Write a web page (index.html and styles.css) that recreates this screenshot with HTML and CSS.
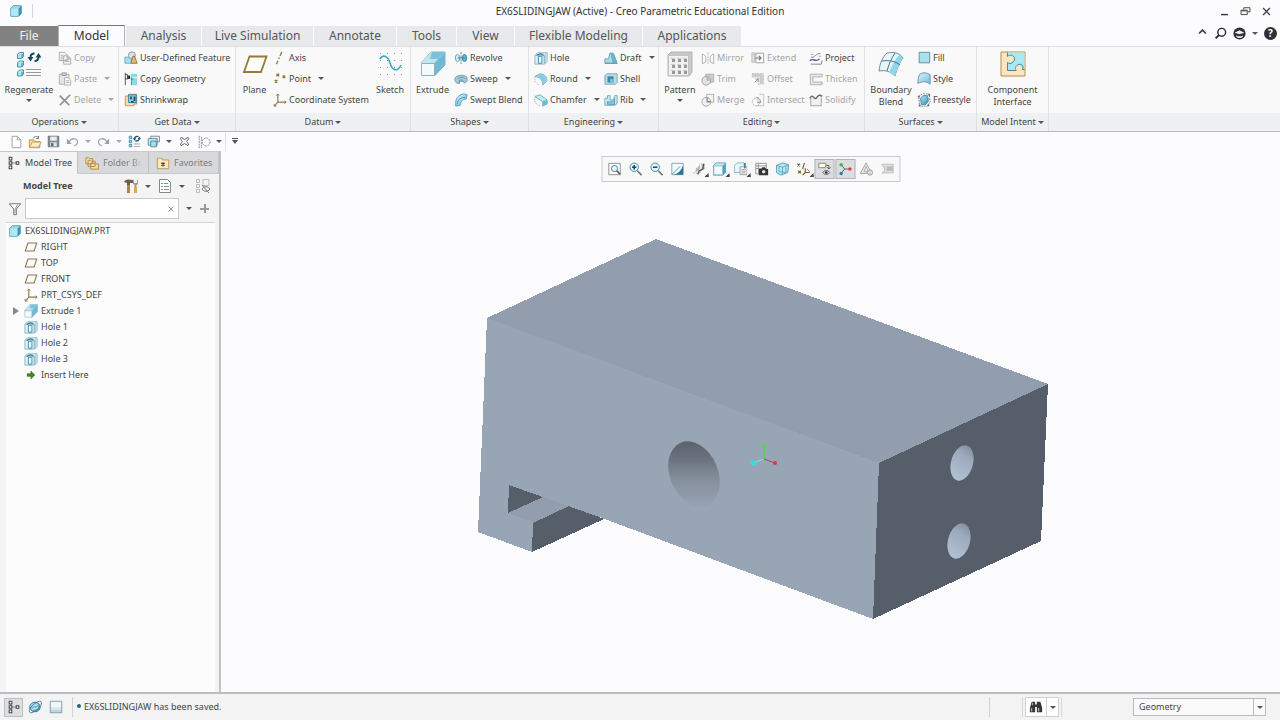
FILE: index.html
```html
<!DOCTYPE html>
<html lang="en">
<head>
<meta charset="utf-8">
<title>EX6SLIDINGJAW (Active) - Creo Parametric Educational Edition</title>
<link rel="stylesheet" href="styles.css">
</head>
<body>
<svg class="defs" aria-hidden="true">
  <defs>
    <linearGradient id="g-ice" x1="0" y1="0" x2="1" y2="1"><stop offset="0" stop-color="#d9f4fb"/><stop offset="1" stop-color="#72bfdb"/></linearGradient>
    <linearGradient id="g-blue" x1="0" y1="0" x2="1" y2="1"><stop offset="0" stop-color="#b6e6f4"/><stop offset="1" stop-color="#3a8fb7"/></linearGradient>
    <linearGradient id="g-hole" x1="0.650" y1="0" x2="0.350" y2="1"><stop offset="0" stop-color="#59616b"/><stop offset="0.250" stop-color="#68707c"/><stop offset="0.600" stop-color="#87919e"/><stop offset="1" stop-color="#98a4b4"/></linearGradient>
    <linearGradient id="g-bore" x1="0.600" y1="0" x2="0.400" y2="1"><stop offset="0" stop-color="#8490a0"/><stop offset="0.300" stop-color="#9daabd"/><stop offset="1" stop-color="#b3c1d4"/></linearGradient>
  </defs>
  <symbol id="cube" viewBox="0 0 16 16"><path d="M2 5 5 2h9v9l-3 3H2z" fill="#9fdbea" stroke="#4c93ac"/><path d="M2.500 5.500h8v8h-8z" fill="#abebf5"/><path d="M11 5v9l3-3V2z" fill="#3f91b3"/></symbol>
  <symbol id="copy" viewBox="0 0 16 16"><path d="M1.500 1.500h6l3 3V11h-9zM6.500 5.500h5l3 3V15h-8z" fill="#f7f7f7" stroke="#a5a5a5"/><path d="M3 5h3M3 7h3M3 9h3M8 10h5M8 12h5M11.500 5.500v3h3" stroke="#adadad" fill="none"/></symbol>
  <symbol id="paste" viewBox="0 0 16 16"><path d="M1.500 2.500h11V14h-11z" fill="#e6e6e6" stroke="#aaa"/><path d="M4.500 1h5v3h-5z" fill="#ccc" stroke="#999"/><path d="M7.500 6.500h4l3 3V15h-7z" fill="#fafafa" stroke="#aaa"/><path d="M9 10h4M9 12h4" stroke="#aaa"/></symbol>
  <symbol id="delete" viewBox="0 0 16 16"><path d="m2 3 11 11M14 2 2 14" stroke="#8f8f8f" stroke-width="2"/></symbol>
  <symbol id="udf" viewBox="0 0 16 16"><path d="M1 7h8v7H1z" fill="#a8ddea" stroke="#6aaec4"/><circle cx="9" cy="5" r="4" fill="#dce3ea" stroke="#7c8fa1"/><path d="M10 6h2l3 8H8z" fill="#e0ba75" stroke="#8b6c3a"/></symbol>
  <symbol id="copygeo" viewBox="0 0 16 16"><path d="M1.500 1v14M1 3h3v5H1" fill="none" stroke="#444"/><path d="M4 4h3v4H4z" fill="#333"/><path d="M8 2h7v4H8zM9 7h6v8H9z" fill="#8fd8e8"/><path d="M8.500 6v9M8 8h3" stroke="#2f7f9c" fill="none"/></symbol>
  <symbol id="shrink" viewBox="0 0 16 16"><path d="M1.500 3.500h4v-2h9v11h-3v2h-10z" fill="#f6e3bb" stroke="#c08c4b"/><path d="M5 2h9v9H5z" fill="#83cbe0" stroke="#2e7d9a"/><path d="M7 4h2v3H7zM11 4h2v5h-2zM8 9h3v2H8z" fill="#15506b"/></symbol>
  <symbol id="axis" viewBox="0 0 16 16"><path d="M10 1 4 15" stroke="#8f7b45" stroke-width="1.500" stroke-dasharray="5 2 2 2"/></symbol>
  <symbol id="point" viewBox="0 0 16 16"><path d="m4 2 3 3M7 2 4 5M11 4l3 3M14 4l-3 3M2 9l3 3M5 9l-3 3" stroke="#8f742e" stroke-width="1.500"/></symbol>
  <symbol id="csys" viewBox="0 0 16 16"><path d="M5.500 1v9.500H15M5.500 10.500 1.500 15" fill="none" stroke="#8b794f" stroke-width="1.300"/><path d="m4 3 1.500-2L7 3M13 9l2 1.500-2 1.500M1.300 12.500V15H4" fill="none" stroke="#8b794f"/></symbol>
  <symbol id="plane" viewBox="0 0 16 16"><path d="M4.500 3.500h10l-3 9h-10z" fill="#fdfdf6" stroke="#7e7650" stroke-width="1.200"/></symbol>
  <symbol id="revolve" viewBox="0 0 16 16"><ellipse cx="4" cy="8" rx="2.500" ry="4" fill="#d5effa" stroke="#529ec1"/><ellipse cx="12" cy="8" rx="2.500" ry="4" fill="#65b7d8" stroke="#2d7fa7"/><path d="M8 1v14" stroke="#687b86" stroke-dasharray="3 1"/><path d="M4 8h9" stroke="#397f9d"/></symbol>
  <symbol id="sweep" viewBox="0 0 16 16"><path d="M1 8c0-5 13-6 14-1v3c-1 3-4 3-4 1-3-1-5 0-5 2-4 0-5-2-5-5z" fill="#a6cbd7" stroke="#6699aa"/><path d="M4 8c3-3 8-2 9 0M6 13v-3c2-2 5 0 5 1" fill="none" stroke="#5695ab"/></symbol>
  <symbol id="blend" viewBox="0 0 16 16"><path d="M2 11C2 5 6 2 11 1l4 1-1 5C9 7 8 10 7 14l-5 1z" fill="url(#g-ice)" stroke="#4c9abb"/><path d="M4 13c0-6 4-8 9-8" fill="none" stroke="#3986a6"/></symbol>
  <symbol id="hole" viewBox="0 0 16 16"><path d="M1 5 4 2h11v10l-3 3H1z" fill="#dcf1f6" stroke="#8fb2bd"/><path d="M1.500 5h10v9.500M12 5l3-3" fill="none" stroke="#9cc6d2"/><path d="M5 14V6h4v8z" fill="#effbfe" stroke="#2c86aa"/><path d="M3 5c3-2 6-2 8 0" fill="none" stroke="#3286a4" stroke-width="1.500"/><path d="M12.500 5v9" stroke="#6a9cae"/></symbol>
  <symbol id="round" viewBox="0 0 16 16"><path d="M1 5 7 2c5 0 8 4 8 8l-5 5c0-6-3-9-9-10z" fill="#b3e2ef" stroke="#6dabbf"/><path d="M2 5c5 0 8 5 8 9l4-4C14 5 10 3 7 2" fill="#8dcce0"/><path d="M1 6v5l5 4" fill="none" stroke="#aaa" stroke-dasharray="1 1"/></symbol>
  <symbol id="chamfer" viewBox="0 0 16 16"><path d="m1 4 6-2 8 6v4l-5 3V10z" fill="#c7e9f2" stroke="#6dabbf"/><path d="m10 9 5-1v5l-5 2z" fill="#70b9d3"/><path d="M1 5v6l6 4" fill="none" stroke="#999" stroke-dasharray="1 1"/></symbol>
  <symbol id="draft" viewBox="0 0 16 16"><path d="M1 14V9h4l2-7 4 1 4 11z" fill="#a9dceb" stroke="#6c9aaa"/><path d="m7 2 3 12h5L11 3z" fill="#68b4ce"/><path d="M1 14h14" stroke="#888"/></symbol>
  <symbol id="shell" viewBox="0 0 16 16"><path d="M1 4 3 2h12v10l-2 2H1z" fill="#b8dae3" stroke="#82a2ad"/><path d="M4 5h7v7H4z" fill="#3b89ab"/><path d="M7 8h4v4H7z" fill="#66c9e4"/></symbol>
  <symbol id="rib" viewBox="0 0 16 16"><path d="M1 6h3V3h3v5c3 0 5-1 5-5h3v9l-3 2H1z" fill="#c3eaf3" stroke="#6aa8bc"/><path d="M4 10c5 1 7-1 8-4v7H4z" fill="#84cadf" stroke="#559caf"/></symbol>
  <symbol id="mirror" viewBox="0 0 16 16"><path d="M1.500 3.500h1l3 3v6l-4 2zM14.500 3.500h-1l-3 3v6l4 2z" fill="none" stroke="#a9a9a9"/><path d="M8 1v14" stroke="#bbb" stroke-dasharray="3 1"/></symbol>
  <symbol id="trim" viewBox="0 0 16 16"><path d="M5.500 2.500h9v9h-9z" fill="#ccc" stroke="#aaa"/><circle cx="6" cy="10" r="5" fill="#e3e3e3" stroke="#999"/><path d="M6 6a4 4 0 0 1 4 4H6z" fill="#bbb"/></symbol>
  <symbol id="merge" viewBox="0 0 16 16"><path d="M6.500 1.500h8v9h-8z" fill="#f3f3f3" stroke="#aaa"/><circle cx="6" cy="10" r="5" fill="#f1f1f1" stroke="#999"/><path d="M7 5.500V10h4" fill="none" stroke="#888" stroke-width="1.500"/></symbol>
  <symbol id="extend" viewBox="0 0 16 16"><path d="M1 2h3v11H1z" fill="#ddd" stroke="#bbb"/><path d="M5.500 2.500h9v11h-9z" fill="none" stroke="#999"/><path d="M5 8h6M9 5.500 11.500 8 9 10.500" fill="none" stroke="#777" stroke-width="1.400"/></symbol>
  <symbol id="offset" viewBox="0 0 16 16"><path d="M1 5.500h8v9M1 2h13v12" fill="none" stroke="#aaa" stroke-dasharray="2 1"/><path d="M10 3h4v11h-4zM1 2h12v3H1z" fill="#ccc"/><path d="m4 12 4-4M5 8h3v3" fill="none" stroke="#888"/></symbol>
  <symbol id="intersect" viewBox="0 0 16 16"><path d="M9.500 1.500h5v13h-9" fill="none" stroke="#bbb"/><circle cx="6" cy="10" r="4.500" fill="none" stroke="#aaa" stroke-dasharray="2 1"/><path d="M6 5c4 1 5 3 5 6H7" fill="#ddd" stroke="#888"/></symbol>
  <symbol id="project" viewBox="0 0 16 16"><path d="M2 7c4 2 6-5 11-4M2 15h12l1-4" fill="none" stroke="#777"/><path d="M1 11c5-4 6 3 11-2" fill="none" stroke="#644c8d" stroke-width="1.600"/><path d="M2 4h3M11 6h3" stroke="#999"/></symbol>
  <symbol id="thicken" viewBox="0 0 16 16"><path d="M15 2.500H1.500v12H15v-3H4.500v-6H15z" fill="#e8e8e8" stroke="#aaa"/></symbol>
  <symbol id="solidify" viewBox="0 0 16 16"><path d="M2 5v9.500h12V5" fill="#f2f2f2" stroke="#999"/><path d="M1 6c3-7 5 4 8-1 2-3 4-3 6-1" fill="none" stroke="#666" stroke-width="1.600"/></symbol>
  <symbol id="fill" viewBox="0 0 16 16"><path d="M2.500 1.500h12v12h-12z" fill="#a6e3ee" stroke="#5c8796"/></symbol>
  <symbol id="style" viewBox="0 0 16 16"><path d="M1 13C1 8 2 3 4 2c4-2 7-1 11 1v11c-3-3-8-4-14-1z" fill="url(#g-ice)" stroke="#67899a"/></symbol>
  <symbol id="freestyle" viewBox="0 0 16 16"><path d="M2 4 6 1h8l1 9-3 5H3z" fill="none" stroke="#68747b" stroke-dasharray="2 1"/><path d="m4 6 3-3h5l1 6-3 4H5z" fill="url(#g-blue)" stroke="#3683a2"/><path d="M1 3h2v2H1zM13 1h2v2h-2zM2 13h2v2H2zM12 13h2v2h-2z" fill="#666"/></symbol>

  <symbol id="regenerate" viewBox="0 0 26 26"><g fill="#a9e8f2" stroke="#4c93ac"><path d="m1.500 3 2-1.500h4v4l-2 2h-4zM1.500 12l2-2h4v4l-2 2h-4zM1.500 21l2-2h4v4l-2 2h-4z"/></g><path d="M6 3v4M6 12v4M6 21v4" stroke="#347f9a"/><g fill="none" stroke="#154b65" stroke-width="2"><path d="M14.500 6.500c0-3 2-4 4-4M22.500 6c0 3-2 4-4 4"/></g><path d="M11.500 6h6l-3 4.500zM19.500 6.500l3-4.500 3 4.500z" fill="#154b65"/><path d="M10 18.500h15M10 21.500h15M10 24.500h15" stroke="#999"/></symbol>
  <symbol id="plane-l" viewBox="0 0 26 26"><path d="M7.500 5.500h17L19 21H2z" fill="#fdfdf7" stroke="#927b3b" stroke-width="1.800"/></symbol>
  <symbol id="sketch" viewBox="0 0 26 26"><path d="M3 2.500h22M3 9.500h22M3 16.500h22M3 23.500h22" stroke="#969696" stroke-dasharray="1 6"/><path d="M3 8c3-5 8-3 10 4s7 10 11 2" fill="none" stroke="#40a6c1" stroke-width="1.600"/></symbol>
  <symbol id="extrude" viewBox="0 0 26 26"><path d="M1 12 11 1h14v13L14 25V12z" fill="#8acbe2" stroke="#90aeb9"/><path d="M1 12 11 1h14L14 12z" fill="#bfe5ef"/><path d="m15 12 10-11v13L15 25z" fill="#6fb9d5"/><path d="m12 1-2 7h8l7-7z" fill="#7cc0d9"/><path d="M1.500 12.500h13v12h-13z" fill="#f2fafc" stroke="#9badb5"/></symbol>
  <symbol id="pattern" viewBox="0 0 26 26"><path d="m1 4 3-3h21v20l-3 4H1z" fill="#c9c9c9" stroke="#b3b3b3"/><path d="M1.500 4.500h20v20h-20z" fill="#f0f0f0" stroke="#c4c4c4"/><g fill="#999"><path d="M5 8h3v3H5zM11 8h3v3h-3zM17 8h3v3h-3zM5 14h3v3H5zM11 14h3v3h-3zM17 14h3v3h-3zM5 20h3v3H5zM11 20h3v3h-3zM17 20h3v3h-3z"/></g><path d="M4 7.500h4M10 7.500h4M16 7.500h4M4 13.500h4M10 13.500h4M16 13.500h4M4 19.500h4M10 19.500h4M16 19.500h4" stroke="#ccc"/></symbol>
  <symbol id="boundary" viewBox="0 0 26 26"><path d="M1 20C2 11 5 6 9 2c6-1 12-1 16 5-3 4-6 10-8 18-5-5-10-6-16-5z" fill="#e5f7fc" stroke="#6f8e9b"/><path d="M15 13c2-4 4-7 6-9l4 3c-3 4-6 10-8 18l-6-4z" fill="#8fd6ec"/><path d="M4 10c7-1 13 0 18 4M17 2c-4 6-6 11-8 18" fill="none" stroke="#50727f"/></symbol>
  <symbol id="component" viewBox="0 0 26 26"><path d="M1 1h24v24H1z" fill="#fae7c2" stroke="#bd884f"/><path d="M7.500 1.500h17v18H7.500z" fill="#a8e9f3"/><path d="M7.500 1.500v4c5-4 9 2 6 5-2 3-5 2-6 1v8h9c-4-7 9-9 6-1h2" fill="none" stroke="#5c8186"/><path d="M7.500 6c5-4 8 2 5 4-2 2-4 1-5 1zM16.500 19.500c-3-7 8-7 5 0z" fill="#fae7c2"/></symbol>

  <symbol id="new" viewBox="0 0 16 16"><path d="M3.500 1.500h6l4 4v9h-10z" fill="#fff" stroke="#999"/><path d="M9.500 1.500v4h4" fill="none" stroke="#999"/></symbol>
  <symbol id="open" viewBox="0 0 16 16"><path d="M1.500 5.500h5l1 2h6v7h-12z" fill="#f5db94" stroke="#b8924c"/><path d="m2 14 3-6h10l-3 6z" fill="#ffefbf" stroke="#c19b55"/><path d="M6 4c1-3 4-3 6-1M12 1v3H9" fill="none" stroke="#666"/></symbol>
  <symbol id="save" viewBox="0 0 16 16"><path d="M1.500 1.500h13v13h-13z" fill="#858e93" stroke="#646d71"/><path d="M4 2h8v5H4z" fill="#e8eff2"/><path d="M4 9h8v5H4z" fill="#dce5e8"/><path d="M5 10h3v4H5z" fill="#606b70"/></symbol>
  <symbol id="undo" viewBox="0 0 16 16"><path d="M4 8c3-5 11-4 10 1 0 2-2 4-4 4" fill="none" stroke="#a0a5a9" stroke-width="1.700"/><path d="M1 4v7h6z" fill="#9ba0a4"/></symbol>
  <symbol id="regen-s" viewBox="0 0 16 16"><path d="M1.500 1.500h3v3h-3zM1.500 6.500h3v3h-3zM1.500 11.500h3v3h-3z" fill="#a5dbe9" stroke="#3b839b"/><path d="M8 5c0-3 3-4 5-3M14 4c0 3-3 4-5 3" fill="none" stroke="#17536d" stroke-width="1.600"/><path d="M6 4h4L8 7zM12 5h4l-2-3z" fill="#17536d"/><path d="M7 11h8M7 14h8" stroke="#999"/></symbol>
  <symbol id="windows" viewBox="0 0 16 16"><path d="M4.500 1.500h11v7h-11z" fill="#eee" stroke="#777"/><path d="M1.500 4.500h11v8h-11z" fill="#d2edf5" stroke="#397e98"/><path d="M4.500 7.500h7v7h-7z" fill="#aadfec" stroke="#397e98"/></symbol>
  <symbol id="closewin" viewBox="0 0 16 16"><path d="m3 2 5 3 5-3 1 2-3 4 3 4-1 2-5-3-5 3-1-2 3-4-3-4z" fill="#fff" stroke="#555" stroke-width="1.300"/></symbol>
  <symbol id="sel" viewBox="0 0 16 16"><path d="M2.500 1v14M5 2v13" stroke="#777" stroke-dasharray="2 1"/><circle cx="10.500" cy="8" r="4.500" fill="none" stroke="#777" stroke-dasharray="2 1"/></symbol>
  <symbol id="tree" viewBox="0 0 16 16"><path d="M4.500 4v8M5 8h6" stroke="#777"/><path d="M2.500 1.500h3v3h-3zM2.500 6.500h3v3h-3zM2.500 11.500h3v3h-3zM10.500 6.500h3v3h-3z" fill="#fff" stroke="#444" stroke-width="1.200"/></symbol>
  <symbol id="folders" viewBox="0 0 16 16"><g fill="#f8dda1" stroke="#ae8247"><path d="M1 2h3l1 1h4v6H1zM3.500 5h3l1 1h4v6h-8zM6.500 8h3l1 1h5v6h-9z"/></g></symbol>
  <symbol id="favs" viewBox="0 0 16 16"><path d="M1.500 2.500h5l1 2h7v10h-13z" fill="#fbe9bd" stroke="#b99458"/><path d="M8 7v5M6 8l4 3M10 8l-4 3" stroke="#175068" stroke-width="1.200"/></symbol>
  <symbol id="tools" viewBox="0 0 16 16"><path d="M1 4c1-3 5-3 9-2v3H7v10H4V5z" fill="#755e49"/><path d="M4 7h3v8H4z" fill="#b38648"/><path d="M11 1v4h3V1l1 2v3l-1.500 1v3h-2V7L10 6V3z" fill="#999"/><path d="M11 9h3v6h-3z" fill="#e0aa4e"/></symbol>
  <symbol id="doc" viewBox="0 0 16 16"><path d="M2.500 1.500h8l3 3v10h-11z" fill="#fff" stroke="#888"/><path d="M4 5.500h2M7 5.500h4M4 8.500h2M7 8.500h5M4 11.500h2M7 11.500h5" stroke="#7d939e"/></symbol>
  <symbol id="treehide" viewBox="0 0 16 16"><path d="M1.500 1.500h3v3h-3zM1.500 6.500h3v3h-3zM1.500 11.500h3v3h-3zM8 1.500h6v6H8z" fill="none" stroke="#bbb"/><path d="M7 11c2-3 6-3 8 0-2 3-6 3-8 0M7 7l7 8" fill="none" stroke="#777"/></symbol>
  <symbol id="funnel" viewBox="0 0 16 16"><path d="M1.500 2h13L9.500 8v6.500h-3V8z" fill="#fff" stroke="#666"/><path d="M11 3 8 8v5" fill="none" stroke="#888"/></symbol>
  <symbol id="insert" viewBox="0 0 16 16"><path d="M2 6h6V2l6 6-6 6v-4H2z" fill="#3f8b1f" stroke="#286010"/></symbol>
  <symbol id="xmark" viewBox="0 0 16 16"><path d="m3 3 10 10M13 3 3 13" stroke="currentColor" stroke-width="2"/></symbol>

  <symbol id="refit" viewBox="0 0 16 16"><path d="M1.500 1.500h13v13h-13z" fill="#fff" stroke="#858585"/><circle cx="8" cy="7.500" r="3.500" fill="#e8f8fd" stroke="#36748b"/><path d="m10.500 10 4 4" stroke="#555" stroke-width="2"/></symbol>
  <symbol id="zoomin" viewBox="0 0 16 16"><circle cx="6.500" cy="6" r="4.800" fill="#e4f5fb" stroke="#357a98"/><path d="M4 6h5M6.500 3.500v5" stroke="#0b506e" stroke-width="1.800"/><path d="m10 10 5 5" stroke="#777" stroke-width="2"/></symbol>
  <symbol id="zoomout" viewBox="0 0 16 16"><circle cx="6.500" cy="6" r="4.800" fill="#e4f5fb" stroke="#357a98"/><path d="M4 6h5" stroke="#0b506e" stroke-width="1.800"/><path d="m10 10 5 5" stroke="#777" stroke-width="2"/></symbol>
  <symbol id="repaint" viewBox="0 0 16 16"><path d="M1.500 1.500h13v13h-13z" fill="#eefafd" stroke="#829da7"/><path d="M14.500 4v10.500H4C9 13 12 10 14.500 4z" fill="#277697"/><path d="m2 14 9-9" stroke="#4c95b1"/></symbol>
  <symbol id="render" viewBox="0 0 16 16"><path d="M1 12c3 0 4-1 4-4 1-2 3-1 4-6h6v6l-4 2c-1 4-5 5-10 2z" fill="#b4b4b4"/><path d="M9 3c3 0 2 5 0 7-2 2-4 3-6 2" fill="none" stroke="#f2f2f2" stroke-width="2"/><path d="m14 2-1 6-4 2-2 4" stroke="#555" stroke-width="1.500" fill="none"/></symbol>
  <symbol id="box" viewBox="0 0 16 16"><path d="M1 4 4 1h11v11l-3 3H1z" fill="#bfeaf4" stroke="#5b9eb3"/><path d="M1.500 4.500h10v10h-10z" fill="#f1fcff" stroke="#8cb5c2"/><path d="M12 4v11l3-3V1z" fill="#51a2c0"/></symbol>
  <symbol id="views" viewBox="0 0 16 16"><path d="M1 4 4 1h8v11H1z" fill="#e4f7fb" stroke="#8bb0bd"/><path d="M7.500 5.500h8v9h-8z" fill="#fafafa" stroke="#999"/><path d="M9 8.500h5M9 10.500h5M9 12.500h5" stroke="#999"/><path d="M13 1v6" stroke="#3b83a0" stroke-width="2"/></symbol>
  <symbol id="viewmgr" viewBox="0 0 16 16"><path d="M1.500 1.500h12v12h-12zM1.500 4.500h12M1.500 7.500h12M4.500 2v11" fill="#fff" stroke="#888"/><path d="M5 8h3l1-2h3l1 2h3v7H5z" fill="#333"/><circle cx="10.500" cy="11" r="2" fill="#ddd"/></symbol>
  <symbol id="persp" viewBox="0 0 16 16"><path d="m1 4 7-3 7 2-1 9-8 3-5-3z" fill="#b9e6f1" stroke="#4d96b1"/><path d="m1 4 7 2v9M8 6l7-3M4 6v5l8 1V5" fill="none" stroke="#5aa5c0"/></symbol>
  <symbol id="datums" viewBox="0 0 16 16"><path d="m1 2 3 3M4 2 1 5M9 1 7 8M2 10l3 3M5 10l-3 3M10 7v5h5M10 12l-3 3" fill="none" stroke="#775d27" stroke-width="1.300"/><path d="m12 8 3 3" stroke="#8e6a22"/></symbol>
  <symbol id="annot" viewBox="0 0 16 16"><path d="M1.500 1.500h8v5h-8z" fill="#fffdec" stroke="#917b4a"/><path d="M10 4h3v4M11 6l2 2 2-2M6 12c2-3 6-3 8 0-2 3-6 3-8 0z" fill="none" stroke="#555"/><circle cx="10" cy="12" r="1.500" fill="#333"/></symbol>
  <symbol id="spin" viewBox="0 0 16 16"><path d="m3 3 4 5-4 5M7 8h6" fill="none" stroke="#555"/><circle cx="3" cy="3" r="2" fill="#5ba85c"/><circle cx="3" cy="13" r="2" fill="#347baa"/><circle cx="13" cy="8" r="2" fill="#c44"/></symbol>
  <symbol id="warn" viewBox="0 0 16 16"><path d="m7.500 1 6.500 12H1z" fill="#eee" stroke="#999"/><path d="M7.500 5 10 11H5z" fill="none" stroke="#aaa"/><circle cx="12" cy="12" r="3" fill="#ddd" stroke="#999"/></symbol>
  <symbol id="section" viewBox="0 0 16 16"><path d="M1.500 2.500h13v10h-13l3-2v-3z" fill="#ddd" stroke="#bbb"/><path d="M7 5h7v5H7z" fill="#bbb"/></symbol>
  <symbol id="globe" viewBox="0 0 16 16"><ellipse cx="8" cy="8" rx="6" ry="5.500" fill="url(#g-blue)" stroke="#347b9b"/><path d="M4 7c3-4 4 1 7-2M5 11c2-3 5 1 6-3" fill="none" stroke="#b7e4f3" stroke-width="1.600"/><path d="M2 14C-1 10 11-1 15 2c3 5-11 15-13 12z" fill="none" stroke="#4e7588"/></symbol>
  <symbol id="pane" viewBox="0 0 16 16"><path d="M1.500 1.500h13v13h-13z" fill="url(#g-pane)" stroke="#5d8191"/><path d="M2 2h12v6H2z" fill="#f1f8fa"/><path d="M2 8h12v3H2z" fill="#d9eaf0"/><path d="M2 11h12v3H2z" fill="#bcd8e2"/></symbol>
  <symbol id="binoc" viewBox="0 0 16 16"><path d="M3 2h4v3h2V2h4l2 7v5H9V8H7v6H1V9z" fill="#333"/><path d="M3 9v4M11 9v4M4 3v3" stroke="#aaa" stroke-width="1.500"/></symbol>
  <symbol id="min" viewBox="0 0 16 16"><path d="M3 12.500h10" stroke="#333" stroke-width="2"/></symbol>
  <symbol id="restore" viewBox="0 0 16 16"><path d="M5.500 5V2.500h9v6H11M1.500 6h9v6.500h-9zM2 7h8" fill="none" stroke="#444" stroke-width="1.400"/></symbol>
  <symbol id="up" viewBox="0 0 16 16"><path d="m3 8 5-5 5 5" fill="none" stroke="#444" stroke-width="2.500"/></symbol>
  <symbol id="find" viewBox="0 0 16 16"><circle cx="9.500" cy="6.500" r="4.800" fill="none" stroke="#2a2a2a" stroke-width="1.800"/><path d="m6 10-4 4" stroke="#2a2a2a" stroke-width="2.500"/></symbol>
  <symbol id="learn" viewBox="0 0 16 16"><circle cx="8" cy="8" r="7.500" fill="#303033"/><path d="m2 7 6-3 6 3-6 2zM4 10c2 2 6 2 8 0v2c-2 2-6 2-8 0z" fill="#eee"/></symbol>
</svg>

<header class="titlebar">
  <svg class="i14 appicon"><use href="#cube"/></svg>
  <h1>EX6SLIDINGJAW (Active) - Creo Parametric Educational Edition</h1>
  <div class="winctl">
    <button aria-label="Minimize"><svg class="i11"><use href="#min"/></svg></button>
    <button aria-label="Restore"><svg class="i11"><use href="#restore"/></svg></button>
    <button aria-label="Close"><svg class="i11"><use href="#xmark"/></svg></button>
  </div>
</header>

<nav class="tabs">
  <button class="tab file">File</button>
  <button class="tab active">Model</button>
  <button class="tab t-analysis">Analysis</button>
  <button class="tab t-live">Live Simulation</button>
  <button class="tab t-annotate">Annotate</button>
  <button class="tab t-tools">Tools</button>
  <button class="tab t-view">View</button>
  <button class="tab t-flex">Flexible Modeling</button>
  <button class="tab t-apps">Applications</button>
  <div class="tabctl">
    <button aria-label="Collapse ribbon"><svg class="i11"><use href="#up"/></svg></button>
    <button aria-label="Search"><svg class="i13"><use href="#find"/></svg></button>
    <button aria-label="Learning"><svg class="i13"><use href="#learn"/></svg></button>
    <button aria-label="More"><i class="arr"></i></button>
    <button class="help" aria-label="Help">?</button>
  </div>
</nav>

<section class="ribbon" aria-label="Model ribbon">
  <div class="group w119">
    <div class="tools c-ops">
      <button class="big"><svg><use href="#regenerate"/></svg><span>Regenerate</span><i class="arr"></i></button>
      <div class="col">
        <button class="sm" disabled><svg><use href="#copy"/></svg>Copy</button>
        <button class="sm" disabled><svg><use href="#paste"/></svg>Paste<i class="arr"></i></button>
        <button class="sm" disabled><svg><use href="#delete"/></svg>Delete<i class="arr"></i></button>
      </div>
    </div>
    <button class="label">Operations<i class="arr"></i></button>
  </div>
  <div class="group w117">
    <div class="tools c-data">
      <div class="col">
        <button class="sm"><svg><use href="#udf"/></svg>User-Defined Feature</button>
        <button class="sm"><svg><use href="#copygeo"/></svg>Copy Geometry</button>
        <button class="sm"><svg><use href="#shrink"/></svg>Shrinkwrap</button>
      </div>
    </div>
    <button class="label">Get Data<i class="arr"></i></button>
  </div>
  <div class="group w175">
    <div class="tools c-datum">
      <button class="big"><svg><use href="#plane-l"/></svg><span>Plane</span></button>
      <div class="col">
        <button class="sm"><svg><use href="#axis"/></svg>Axis</button>
        <button class="sm"><svg><use href="#point"/></svg>Point<i class="arr"></i></button>
        <button class="sm"><svg><use href="#csys"/></svg>Coordinate System</button>
      </div>
      <button class="big"><svg><use href="#sketch"/></svg><span>Sketch</span></button>
    </div>
    <button class="label">Datum<i class="arr"></i></button>
  </div>
  <div class="group w118">
    <div class="tools c-shapes">
      <button class="big"><svg><use href="#extrude"/></svg><span>Extrude</span></button>
      <div class="col">
        <button class="sm"><svg><use href="#revolve"/></svg>Revolve</button>
        <button class="sm"><svg><use href="#sweep"/></svg>Sweep<i class="arr"></i></button>
        <button class="sm"><svg><use href="#blend"/></svg>Swept Blend</button>
      </div>
    </div>
    <button class="label">Shapes<i class="arr"></i></button>
  </div>
  <div class="group w130">
    <div class="tools c-eng">
      <div class="col">
        <button class="sm"><svg><use href="#hole"/></svg>Hole</button>
        <button class="sm"><svg><use href="#round"/></svg>Round<i class="arr"></i></button>
        <button class="sm"><svg><use href="#chamfer"/></svg>Chamfer<i class="arr"></i></button>
      </div>
      <div class="col">
        <button class="sm"><svg><use href="#draft"/></svg>Draft<i class="arr"></i></button>
        <button class="sm"><svg><use href="#shell"/></svg>Shell</button>
        <button class="sm"><svg><use href="#rib"/></svg>Rib<i class="arr"></i></button>
      </div>
    </div>
    <button class="label">Engineering<i class="arr"></i></button>
  </div>
  <div class="group w206">
    <div class="tools c-edit">
      <button class="big"><svg><use href="#pattern"/></svg><span>Pattern</span><i class="arr"></i></button>
      <div class="col">
        <button class="sm" disabled><svg><use href="#mirror"/></svg>Mirror</button>
        <button class="sm" disabled><svg><use href="#trim"/></svg>Trim</button>
        <button class="sm" disabled><svg><use href="#merge"/></svg>Merge</button>
      </div>
      <div class="col">
        <button class="sm" disabled><svg><use href="#extend"/></svg>Extend</button>
        <button class="sm" disabled><svg><use href="#offset"/></svg>Offset</button>
        <button class="sm" disabled><svg><use href="#intersect"/></svg>Intersect</button>
      </div>
      <div class="col">
        <button class="sm"><svg><use href="#project"/></svg>Project</button>
        <button class="sm" disabled><svg><use href="#thicken"/></svg>Thicken</button>
        <button class="sm" disabled><svg><use href="#solidify"/></svg>Solidify</button>
      </div>
    </div>
    <button class="label">Editing<i class="arr"></i></button>
  </div>
  <div class="group w112">
    <div class="tools c-surf">
      <button class="big"><svg><use href="#boundary"/></svg><span>Boundary Blend</span></button>
      <div class="col">
        <button class="sm"><svg><use href="#fill"/></svg>Fill</button>
        <button class="sm"><svg><use href="#style"/></svg>Style</button>
        <button class="sm"><svg><use href="#freestyle"/></svg>Freestyle</button>
      </div>
    </div>
    <button class="label">Surfaces<i class="arr"></i></button>
  </div>
  <div class="group w72">
    <div class="tools c-intent">
      <button class="big"><svg><use href="#component"/></svg><span>Component Interface</span></button>
    </div>
    <button class="label">Model Intent<i class="arr"></i></button>
  </div>
  <div class="ribbon-rest"></div>
</section>

<div class="quick" role="toolbar" aria-label="Quick access">
  <button class="q" aria-label="New"><svg class="i14"><use href="#new"/></svg></button>
  <button class="q" aria-label="Open"><svg class="i14"><use href="#open"/></svg></button>
  <button class="q" aria-label="Save"><svg class="i13"><use href="#save"/></svg></button>
  <button class="q" aria-label="Undo"><svg class="i13"><use href="#undo"/></svg></button>
  <button class="q a dim" aria-label="Undo list"><i class="arr"></i></button>
  <button class="q" aria-label="Redo"><svg class="i13 flip"><use href="#undo"/></svg></button>
  <button class="q a dim" aria-label="Redo list"><i class="arr"></i></button>
  <button class="q" aria-label="Regenerate"><svg class="i13"><use href="#regen-s"/></svg></button>
  <button class="q" aria-label="Windows"><svg class="i13"><use href="#windows"/></svg></button>
  <button class="q a" aria-label="Windows list"><i class="arr"></i></button>
  <button class="q" aria-label="Close window"><svg class="i11"><use href="#closewin"/></svg></button>
  <button class="q" aria-label="Selection"><svg class="i14"><use href="#sel"/></svg></button>
  <button class="q a" aria-label="Selection list"><i class="arr"></i></button>
  <button class="q custom" aria-label="Customize toolbar"><i class="arr"></i></button>
</div>

<main class="work">
  <aside class="side">
    <div class="sidetabs">
      <button class="stab on"><svg class="i14"><use href="#tree"/></svg><span>Model Tree</span></button>
      <button class="stab folder" aria-label="Folder Browser"><svg class="i14"><use href="#folders"/></svg><span>Folder Br</span></button>
      <button class="stab fav"><svg class="i14"><use href="#favs"/></svg><span>Favorites</span></button>
    </div>
    <div class="sidehead">
      <h2>Model Tree</h2>
      <button aria-label="Settings"><svg class="i16"><use href="#tools"/></svg></button>
      <button aria-label="Settings list"><i class="arr"></i></button>
      <button aria-label="Show"><svg class="i16"><use href="#doc"/></svg></button>
      <button aria-label="Show list"><i class="arr"></i></button>
      <button class="hide" aria-label="Hide tree"><svg class="i16"><use href="#treehide"/></svg></button>
    </div>
    <div class="filter">
      <svg class="i14"><use href="#funnel"/></svg>
      <div class="search"><input type="text" aria-label="Filter model tree"><button aria-label="Clear"><svg class="i8"><use href="#xmark"/></svg></button></div>
      <button aria-label="Filter list"><i class="arr"></i></button>
      <button class="plus" aria-label="Add"></button>
    </div>
    <ul class="tree">
      <li class="root"><svg><use href="#cube"/></svg>EX6SLIDINGJAW.PRT</li>
      <li><svg><use href="#plane"/></svg>RIGHT</li>
      <li><svg><use href="#plane"/></svg>TOP</li>
      <li><svg><use href="#plane"/></svg>FRONT</li>
      <li><svg><use href="#csys"/></svg>PRT_CSYS_DEF</li>
      <li class="has"><button class="exp" aria-label="Expand Extrude 1"></button><svg><use href="#extrude"/></svg>Extrude 1</li>
      <li><svg><use href="#hole"/></svg>Hole 1</li>
      <li><svg><use href="#hole"/></svg>Hole 2</li>
      <li><svg><use href="#hole"/></svg>Hole 3</li>
      <li><svg class="ins"><use href="#insert"/></svg>Insert Here</li>
    </ul>
  </aside>
  <section class="canvas" aria-label="Graphics area">
    <svg class="part" viewBox="221 151 1059 541" role="img" aria-label="Sliding jaw part">
      <g shape-rendering="crispEdges">
        <path d="M656 239 1048 384 879 465 487 320V318z" fill="#929dad"/>
        <path d="M879 463 1048 384 1041 541 873 619z" fill="#565f69"/>
        <path d="M532 552 604 519 568 505 533 520z" fill="#565f69"/>
        <path d="M509 485 544 497 508 513z" fill="#565f69"/>
        <path d="M508 513 543 497 569 506 533 523z" fill="#929eae"/>
        <path d="M487 318 879 463 873 619 602 518 509 485 508 513 533 522 532 552 478 532z" fill="#98a5b5"/>
      </g>
      <ellipse cx="694" cy="474" rx="24" ry="34" transform="rotate(-23 694 474)" fill="url(#g-hole)"/>
      <ellipse cx="962" cy="463" rx="11" ry="18" transform="rotate(15 962 463)" fill="url(#g-bore)"/>
      <ellipse cx="959" cy="541" rx="11" ry="18" transform="rotate(15 959 541)" fill="url(#g-bore)"/>
      <path d="M764 459V445" stroke="#5ccf5c" stroke-width="2"/><path d="m764 459 11 4" stroke="#a24d59"/><path d="m764 459-11 4" stroke="#76e3e8"/>
      <path d="M764 441 762 447h4z" fill="#5ccf5c"/><circle cx="775" cy="463" r="2" fill="#de383f"/><circle cx="753" cy="463" r="2.500" fill="#30dfe6"/>
    </svg>
    <div class="viewbar" role="toolbar" aria-label="View">
      <button aria-label="Refit"><svg><use href="#refit"/></svg></button>
      <button aria-label="Zoom in"><svg><use href="#zoomin"/></svg></button>
      <button aria-label="Zoom out"><svg><use href="#zoomout"/></svg></button>
      <button aria-label="Repaint"><svg><use href="#repaint"/></svg></button>
      <button class="more" aria-label="Rendering"><svg><use href="#render"/></svg></button>
      <button class="more" aria-label="Display style"><svg><use href="#box"/></svg></button>
      <button class="more" aria-label="Saved orientations"><svg><use href="#views"/></svg></button>
      <button aria-label="View manager"><svg><use href="#viewmgr"/></svg></button>
      <button aria-label="Perspective"><svg><use href="#persp"/></svg></button>
      <button class="more" aria-label="Datum display"><svg><use href="#datums"/></svg></button>
      <button class="on" aria-label="Annotation display"><svg><use href="#annot"/></svg></button>
      <button class="on" aria-label="Spin center"><svg><use href="#spin"/></svg></button>
      <button aria-label="Warnings"><svg><use href="#warn"/></svg></button>
      <button aria-label="Section"><svg><use href="#section"/></svg></button>
    </div>
  </section>
</main>

<footer class="status">
  <button class="s on" aria-label="Navigator"><svg class="i14"><use href="#tree"/></svg></button>
  <button class="s" aria-label="Browser"><svg class="i14"><use href="#globe"/></svg></button>
  <button class="s" aria-label="Full screen"><svg class="i14"><use href="#pane"/></svg></button>
  <p class="msg">EX6SLIDINGJAW has been saved.</p>
  <div class="findwrap">
    <div class="findbox"><button aria-label="Find"><svg class="i14"><use href="#binoc"/></svg></button><button aria-label="Find list"><i class="arr"></i></button></div>
  </div>
  <div class="pick"><select aria-label="Selection filter"><option>Geometry</option></select><i class="arr"></i></div>
</footer>
</body>
</html>
```
FILE: styles.css
```css
* { box-sizing: border-box; }
body {
  margin: 0;
  min-height: 100vh;
  display: flex;
  flex-direction: column;
  background: #fcfcfe;
  color: #444;
  font: 9px/12px "Noto Sans", "Open Sans", sans-serif;
}
button {
  display: flex;
  align-items: center;
  justify-content: center;
  padding: 0;
  border: 0;
  background: none;
  color: inherit;
  font: inherit;
  white-space: nowrap;
}
svg { display: block; flex: none; }
.defs { position: absolute; width: 0; height: 0; }
.i8 { width: 8px; height: 8px; }
.i11 { width: 11px; height: 11px; }
.i13 { width: 13px; height: 13px; }
.i14 { width: 14px; height: 14px; }
.i16 { width: 16px; height: 16px; }
.arr {
  flex: none;
  border: 3px solid transparent;
  border-top-color: #555;
  border-bottom: 0;
}

/* Title bar */
.titlebar {
  display: grid;
  grid-template-columns: 1fr auto 1fr;
  align-items: center;
  height: 22px;
}
.appicon { width: 24px; padding-right: 9px; margin-left: 9px; border-right: 1px solid #d5d6d8; height: 14px; }
.titlebar h1 { margin: 0; font-size: 10px; font-weight: 400; color: #333; }
.winctl { display: flex; justify-content: flex-end; padding-right: 3px; }
.winctl button { width: 21px; height: 20px; color: #444; }

/* Ribbon tabs */
.tabs { display: flex; align-items: flex-end; height: 24px; gap: 1px; }
.tab {
  height: 20px;
  background: #e7e9ea;
  color: #54575b;
  font-size: 12px;
}
.file { width: 58px; margin-right: -1px; background: #828282; color: #eee; }
.active { width: 67px; height: 21px; background: #fcfcfe; border: 1px solid #b4b4b4; border-top-color: #777; border-bottom: 0; color: #333; }
.t-analysis { width: 75px; }
.t-live { width: 111px; }
.t-annotate { width: 82px; }
.t-tools { width: 59px; }
.t-view { width: 57px; }
.t-flex { width: 127px; }
.t-apps { width: 98px; }
.tabctl { display: flex; align-items: center; gap: 6px; margin-left: auto; padding-right: 3px; height: 26px; }
.help { width: 13px; height: 13px; border-radius: 50%; background: #303033; color: #fff; font-size: 10px; font-weight: 700; }

/* Ribbon */
.ribbon { display: flex; border-top: 1px solid #dddfe0; border-bottom: 1px solid #b9bbbd; background: #f9f9fa; }
.group { display: flex; flex-direction: column; flex: none; border-right: 1px solid #dfe1e3; }
.w72 { width: 72px; }
.w112 { width: 112px; }
.w117 { width: 117px; }
.w118 { width: 118px; }
.w119 { width: 119px; }
.w130 { width: 130px; }
.w175 { width: 175px; }
.w206 { width: 206px; }
.tools { display: grid; height: 66px; }
.c-ops { grid-template-columns: 58px 1fr; }
.c-data { padding-left: 5px; }
.c-datum { grid-template-columns: 37px 1fr 40px; }
.c-shapes { grid-template-columns: 43px 1fr; }
.c-eng { grid-template-columns: 70px 1fr; padding-left: 5px; }
.c-edit { grid-template-columns: 42px 50px 58px 1fr; }
.c-surf { grid-template-columns: 52px 1fr; }
.col { display: flex; flex-direction: column; align-items: flex-start; }
.sm { height: 21px; gap: 2px; }
.sm svg { width: 14px; height: 14px; }
.sm .arr { margin-left: 5px; }
.sm:disabled { color: #a5a5a5; }
.sm:disabled .arr { border-top-color: #a5a5a5; }
.big { flex-direction: column; justify-content: flex-start; padding-top: 4px; white-space: normal; }
.big svg { width: 26px; height: 26px; margin-bottom: 7px; }
.big .arr { margin-top: 3px; }
.label { height: 18px; gap: 2px; background: #eff0f2; }
.ribbon-rest { flex: 1; background: linear-gradient(#f9f9fa 66px, #eff0f2 66px); }

/* Quick access */
.quick { display: flex; align-items: center; height: 19px; padding-left: 6px; }
.q { width: 19px; height: 18px; }
.q.a { width: 12px; }
.q.dim .arr { border-top-color: #aaa; }
.q.custom { width: 19px; border-left: 1px solid #ddd; }
.q.custom .arr { border-width: 4px 3px 0; }
.q.custom::before { content: ""; position: absolute; width: 6px; height: 1px; margin-bottom: 7px; background: #555; }
.flip { transform: scaleX(-1); }

/* Work area */
.work { display: flex; flex: 1; }
.side { width: 221px; flex: none; display: flex; flex-direction: column; background: #f4f4f5; border-right: 2px solid #c2c3c6; }
.sidetabs { display: flex; border-top: 1px solid #c8c9cb; }
.stab { height: 22px; gap: 4px; justify-content: flex-start; padding-left: 7px; overflow: hidden; background: #d7d9db; border-right: 1px solid #bfc1c3; border-bottom: 1px solid #c8c9cb; color: #7c7c7c; }
.stab.on { width: 78px; background: #f4f4f5; border-bottom-color: #f4f4f5; color: #444; }
.folder { width: 71px; }
.folder span { -webkit-mask-image: linear-gradient(90deg, #000 75%, transparent); mask-image: linear-gradient(90deg, #000 75%, transparent); }
.fav { flex: 1; }
.sidehead { display: flex; align-items: center; height: 24px; padding: 0 8px 0 23px; gap: 6px; }
.sidehead h2 { flex: 1; margin: 0; font-size: 9px; font-weight: 700; }
.hide { margin-left: 4px; }
.filter { display: flex; align-items: center; gap: 3px; padding: 0 8px 3px; height: 24px; }
.search { display: flex; flex: 1; min-width: 0; height: 21px; background: #fff; border: 1px solid #c9cacc; }
.search input { flex: 1; min-width: 0; border: 0; padding: 0 4px; background: none; font: inherit; }
.search button { width: 15px; color: #999; }
.filter > button { width: 13px; height: 14px; }
.filter .plus { background: linear-gradient(#999, #999) center / 9px 2px no-repeat, linear-gradient(#999, #999) center / 2px 9px no-repeat; }
.tree { flex: 1; margin: 0 4px 0 6px; padding: 0; list-style: none; background: #fcfcfd; border-top: 1px solid #d4d5d7; }
.tree li { display: flex; align-items: center; gap: 3px; height: 16px; padding-left: 18px; }
.tree svg { width: 14px; height: 14px; }
.tree .root { padding-left: 2px; }
.tree .ins { height: 10px; }
.tree .has { padding-left: 7px; }
.exp { width: 8px; height: 8px; border: 4px solid transparent; border-left: 6px solid #888; border-right: 0; }

.canvas { position: relative; flex: 1; min-width: 0; background: #fcfcfe; }
.part { width: 100%; height: 100%; position: absolute; inset: 0; }
.viewbar { position: absolute; top: 5px; left: 50%; transform: translateX(-50%); display: flex; gap: 1px; padding: 2px; border: 1px solid #c9cbcd; background: #f8f8f9; }
.viewbar button { position: relative; width: 20px; height: 20px; }
.viewbar svg { width: 14px; height: 14px; }
.viewbar .on { border: 1px solid #b4b5b9; background: #dcdde0; }
.more::after { content: ""; position: absolute; right: 0; bottom: 2px; border: 2px solid transparent; border-right-color: #444; border-bottom-color: #444; }

/* Status bar */
.status { display: flex; align-items: center; height: 28px; padding: 0 14px 0 4px; gap: 2px; border-top: 2px solid #bcbdc1; background: #f3f3f4; }
.s { width: 19px; height: 19px; }
.s.on { border: 1px solid #bcbec0; background: #dedfe1; }
.msg { flex: 1; margin: 0 0 0 5px; padding-left: 4px; border-left: 1px solid #d2d3d5; line-height: 20px; }
.msg::before { content: ""; display: inline-block; width: 4px; height: 4px; margin-right: 3px; border-radius: 50%; background: #26647f; vertical-align: 2px; }
.findwrap { padding-left: 32px; margin-right: 69px; border-left: 1px solid #d2d3d5; }
.findbox { display: flex; height: 20px; padding: 0 2px; border: solid #d6d7d9; border-width: 0 1px; }
.findbox button { width: 22px; height: 20px; border: 1px solid #cfd0d2; background: #fff; }
.findbox button + button { width: 12px; border-left: 0; }
.pick { position: relative; width: 133px; height: 18px; }
.pick select { width: 100%; height: 100%; padding: 0 5px; border: 1px solid #b9babc; border-radius: 0; background: linear-gradient(#b9babc, #b9babc) right 11px top / 1px 100% no-repeat #fafafa; appearance: none; color: inherit; font: inherit; }
.pick .arr { position: absolute; right: 3px; top: 8px; pointer-events: none; }
```
